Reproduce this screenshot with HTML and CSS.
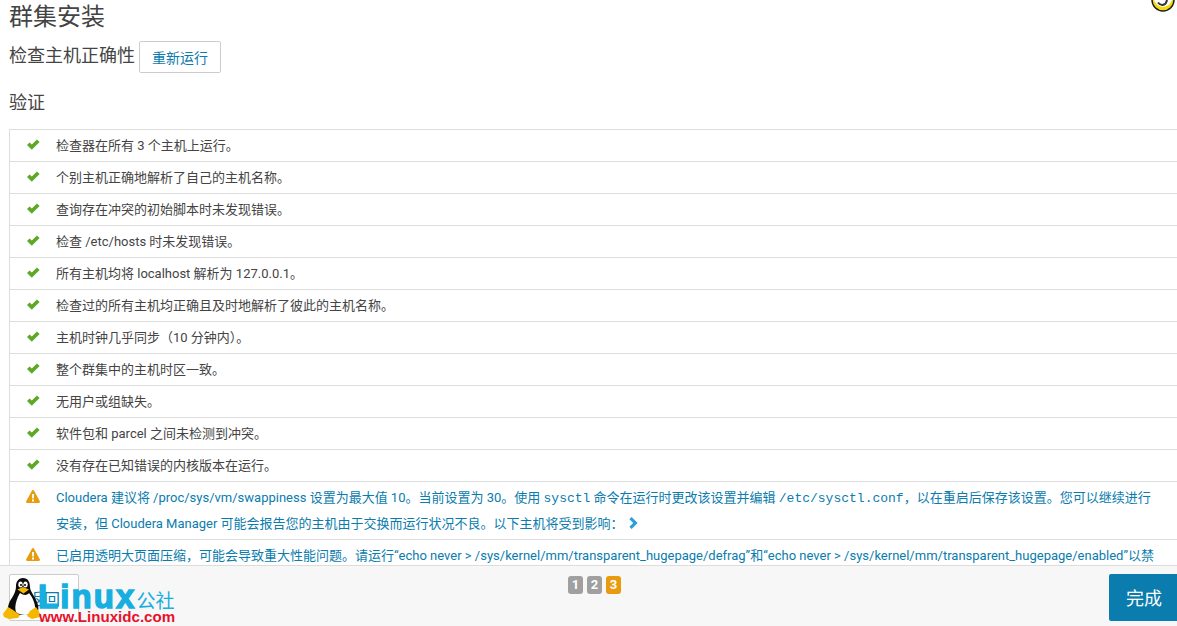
FILE: index.html
```html
<!DOCTYPE html>
<html lang="zh">
<head>
<meta charset="utf-8">
<title>群集安装</title>
<link rel="stylesheet" href="styles.css">
</head>
<body>
<div class="page">
  <main class="main">
    <h1 class="title">群集安装</h1>
    <div class="subhead">
      <h2 class="subtitle">检查主机正确性</h2>
      <button class="btn">重新运行</button>
    </div>
    <h2 class="section">验证</h2>
    <ul class="checks">
      <li class="row"><svg class="ic" viewBox="0 0 14 12"><path class="ok" d="M0 6 2.6 3.4 4.8 5.6 10 0.4 12.6 3 4.8 10.8Z"/></svg><span>检查器在所有 3 个主机上运行。</span></li>
      <li class="row"><svg class="ic" viewBox="0 0 14 12"><path class="ok" d="M0 6 2.6 3.4 4.8 5.6 10 0.4 12.6 3 4.8 10.8Z"/></svg><span>个别主机正确地解析了自己的主机名称。</span></li>
      <li class="row"><svg class="ic" viewBox="0 0 14 12"><path class="ok" d="M0 6 2.6 3.4 4.8 5.6 10 0.4 12.6 3 4.8 10.8Z"/></svg><span>查询存在冲突的初始脚本时未发现错误。</span></li>
      <li class="row"><svg class="ic" viewBox="0 0 14 12"><path class="ok" d="M0 6 2.6 3.4 4.8 5.6 10 0.4 12.6 3 4.8 10.8Z"/></svg><span>检查 /etc/hosts 时未发现错误。</span></li>
      <li class="row"><svg class="ic" viewBox="0 0 14 12"><path class="ok" d="M0 6 2.6 3.4 4.8 5.6 10 0.4 12.6 3 4.8 10.8Z"/></svg><span>所有主机均将 localhost 解析为 127.0.0.1。</span></li>
      <li class="row"><svg class="ic" viewBox="0 0 14 12"><path class="ok" d="M0 6 2.6 3.4 4.8 5.6 10 0.4 12.6 3 4.8 10.8Z"/></svg><span>检查过的所有主机均正确且及时地解析了彼此的主机名称。</span></li>
      <li class="row"><svg class="ic" viewBox="0 0 14 12"><path class="ok" d="M0 6 2.6 3.4 4.8 5.6 10 0.4 12.6 3 4.8 10.8Z"/></svg><span>主机时钟几乎同步（10 分钟内）。</span></li>
      <li class="row"><svg class="ic" viewBox="0 0 14 12"><path class="ok" d="M0 6 2.6 3.4 4.8 5.6 10 0.4 12.6 3 4.8 10.8Z"/></svg><span>整个群集中的主机时区一致。</span></li>
      <li class="row"><svg class="ic" viewBox="0 0 14 12"><path class="ok" d="M0 6 2.6 3.4 4.8 5.6 10 0.4 12.6 3 4.8 10.8Z"/></svg><span>无用户或组缺失。</span></li>
      <li class="row"><svg class="ic" viewBox="0 0 14 12"><path class="ok" d="M0 6 2.6 3.4 4.8 5.6 10 0.4 12.6 3 4.8 10.8Z"/></svg><span>软件包和 parcel 之间未检测到冲突。</span></li>
      <li class="row"><svg class="ic" viewBox="0 0 14 12"><path class="ok" d="M0 6 2.6 3.4 4.8 5.6 10 0.4 12.6 3 4.8 10.8Z"/></svg><span>没有存在已知错误的内核版本在运行。</span></li>
      <li class="row warn"><svg class="ic tri" viewBox="0 0 14 13"><path class="wr" fill-rule="evenodd" d="M7 0C7.5 0 7.9 0.3 8.1 0.7L13.8 11.3C14.2 12 13.7 13 12.8 13H1.2C0.3 13 -0.2 12 0.2 11.3L5.9 0.7C6.1 0.3 6.5 0 7 0ZM5.9 4 6.2 8.6H7.8L8.1 4ZM6 9.6V11.4H8V9.6Z"/></svg><span>Cloudera 建议将 /proc/sys/vm/swappiness 设置为最大值 10。当前设置为 30。使用 <code>sysctl</code> 命令在运行时更改该设置并编辑 <code>/etc/sysctl.conf</code>，以在重启后保存该设置。您可以继续进行安装，但 Cloudera Manager 可能会报告您的主机由于交换而运行状况不良。以下主机将受到影响： <svg class="more" viewBox="0 0 9 12"><path d="M2.6 0 8.6 6 2.6 12 0.4 9.8 4.2 6 0.4 2.2Z"/></svg></span></li>
      <li class="row warn"><svg class="ic tri" viewBox="0 0 14 13"><path class="wr" fill-rule="evenodd" d="M7 0C7.5 0 7.9 0.3 8.1 0.7L13.8 11.3C14.2 12 13.7 13 12.8 13H1.2C0.3 13 -0.2 12 0.2 11.3L5.9 0.7C6.1 0.3 6.5 0 7 0ZM5.9 4 6.2 8.6H7.8L8.1 4ZM6 9.6V11.4H8V9.6Z"/></svg><span>已启用透明大页面压缩，可能会导致重大性能问题。请运行“echo never &gt; /sys/kernel/mm/transparent_hugepage/defrag”和“echo never &gt; /sys/kernel/mm/transparent_hugepage/enabled”以禁用此设置，然后将同一命令添加到 /etc/rc.local 等初始脚本中，以便在系统重启时予以设置。</span></li>
    </ul>
  </main>
  <footer class="footer">
    <button class="btn back">返回</button>
    <div class="steps"><span class="step">1</span><span class="step">2</span><span class="step current">3</span></div>
    <button class="finish">完成</button>
  </footer>
  <svg class="badge" viewBox="0 0 24 12"><circle cx="12" cy="0" r="11" fill="#f5d90a" stroke="#1a1a1a" stroke-width="1.4"/><circle cx="12" cy="-2" r="9" fill="#fff"/><path d="M7 2.5C10 6.5 15 5.5 16 0" fill="none" stroke="#333" stroke-width="2"/></svg>
  <div class="logo">
    <svg class="tux" viewBox="0 0 38 41">
      <path d="M20 0C25 0 27 4 27 9 27 14 33 19 35 27 36 32 35 35 32 37H8C4 35 4 29 7 23 10 18 13 14 13 8 13 3 16 0 20 0Z" fill="#0c0c0c"/>
      <path d="M17 15C21 18 25 17 26 15 30 20 33 27 32 33 30 38 17 38 13 34 11 28 14 20 17 15Z" fill="#fff"/>
      <ellipse cx="17.5" cy="6.5" rx="2.2" ry="2.9" fill="#fff"/>
      <ellipse cx="22.5" cy="6.5" rx="2.2" ry="2.9" fill="#fff"/>
      <circle cx="18" cy="7" r="1" fill="#000"/>
      <circle cx="22" cy="7" r="1" fill="#000"/>
      <path d="M14.5 11.5 20 9 26 11.5 20.5 15.5Z" fill="#f5b800"/>
      <path d="M0 36 5 29 10 32 17 37 15 40 6 41 1 39Z" fill="#f5b800"/>
      <path d="M24 38 27 33 33 29 38 37 37 39 29 41Z" fill="#f5b800"/>
    </svg>
    <div class="brand">
      <div class="brand-top"><span class="linux">Linux</span><span class="gs">公社</span></div>
      <div class="www">www.Linuxidc.com</div>
    </div>
  </div>
</div>
</body>
</html>
```
FILE: styles.css
```css
* { box-sizing: border-box; }
html, body { margin: 0; height: 100%; overflow: hidden; background: #fff; }
body { font-family: Roboto, "Noto Sans CJK SC", sans-serif; color: #444; }
.page { height: 626px; display: flex; flex-direction: column; position: relative; overflow: hidden; }
.main { height: 565px; overflow: hidden; padding-left: 9px; }
.title { margin: 0; font-size: 24px; font-weight: 400; line-height: 34px; color: #444; }
.subhead { display: flex; align-items: center; gap: 4px; margin-top: 7px; height: 32px; }
.subtitle { margin: -2px 0 0; font-size: 18px; font-weight: 400; line-height: 30px; color: #444; }
.btn { height: 32px; padding: 0 12px; font: 14px Roboto, "Noto Sans CJK SC", sans-serif; color: #0a7cad; background: #fff; border: 1px solid #ccc; border-radius: 2px; }
.section { margin: 16px 0 0; font-size: 18px; font-weight: 400; line-height: 28px; height: 40px; color: #444; }
.checks { list-style: none; margin: 0; padding: 0; width: 1300px; border-left: 1px solid #ddd; }
.row { display: flex; align-items: flex-start; border-top: 1px solid #ddd; padding: 3px 0 2px 17px; font-size: 13px; line-height: 26px; color: #444; min-height: 32px; }
.row > span { width: 1100px; flex: none; }
.ic { width: 14px; height: 12px; margin-top: 6px; margin-right: 15px; flex: none; }
.tri { height: 13px; margin: 5px 16px 0 -1px; }
.ok { fill: #5ea827; }
.wr { fill: #e89b0c; }
.warn { color: #0a7cad; }
code { font-family: "Liberation Mono", monospace; font-size: 13px; line-height: 1; }
.more { width: 9px; height: 12px; margin-left: 2px; vertical-align: -1px; fill: #2a9fd8; }
.footer { height: 61px; flex: none; display: flex; align-items: flex-start; justify-content: space-between; background: #f7f7f7; border-top: 1px solid #ddd; padding: 8px 0 0 9px; position: relative; }
.back { width: 70px; height: 47px; font-size: 16px; }
.steps { display: flex; gap: 4px; position: absolute; left: 568px; top: 10px; }
.step { width: 15px; height: 18px; border-radius: 3px; background: #a0a0a0; color: #fff; font-size: 13px; font-weight: 700; line-height: 18px; text-align: center; }
.current { background: #e89b0c; }
.finish { width: 68px; height: 47px; padding: 0 0 2px 2px; border: 0; border-radius: 2px 0 0 2px; background: #0a7cad; color: #fff; font: 18px Roboto, "Noto Sans CJK SC", sans-serif; }
.badge { position: absolute; left: 1151px; top: 0; width: 24px; height: 12px; }
.logo { position: absolute; left: 3px; top: 578px; display: flex; align-items: flex-start; }
.tux { width: 38px; height: 41px; flex: none; }
.brand { margin-left: -3px; margin-top: 5px; }
.brand-top { display: flex; align-items: baseline; height: 27px; }
.linux { font: 700 33px/28px "Liberation Sans", sans-serif; color: #17aee0; letter-spacing: 2.1px; -webkit-text-stroke: 1.4px #17aee0; }
.gs { font: 19px/24px "Noto Sans CJK SC", sans-serif; color: #17aee0; }
.www { font: 700 15.1px/14px "Liberation Sans", sans-serif; color: #e8112d; margin-left: 1px; }
```
